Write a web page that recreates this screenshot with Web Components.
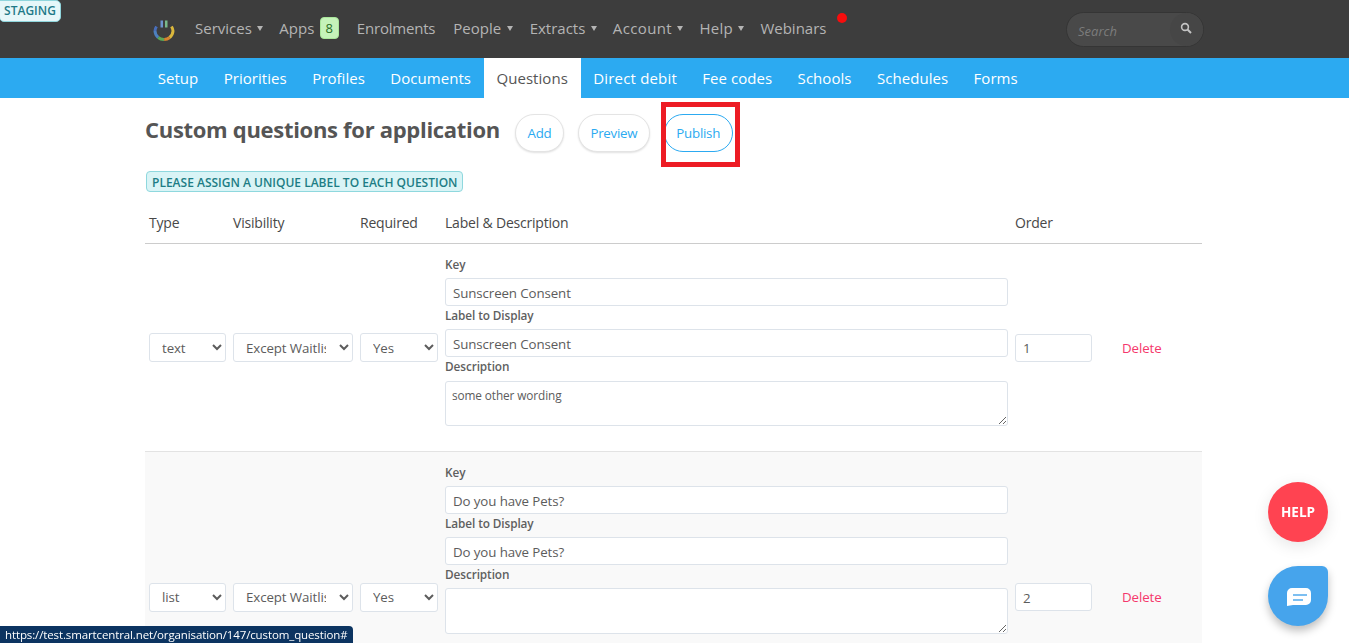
<!DOCTYPE html>
<html lang="en"><head><meta charset="utf-8"><title>Custom questions</title>
<style>
html,body{margin:0;padding:0;height:643px;overflow:hidden;background:#fff;font-family:"Open Sans","Noto Sans",sans-serif;color:#555}
</style></head><body>
<sc-staging>STAGING</sc-staging>
<sc-topbar>
  <sc-nav caret>Services</sc-nav>
  <sc-nav badge="8">Apps</sc-nav>
  <sc-nav style="letter-spacing:-.2px;margin-right:18px">Enrolments</sc-nav>
  <sc-nav caret style="margin-right:17px">People</sc-nav>
  <sc-nav caret>Extracts</sc-nav>
  <sc-nav caret style="letter-spacing:.35px">Account</sc-nav>
  <sc-nav caret style="letter-spacing:.25px">Help</sc-nav>
  <sc-nav dot>Webinars</sc-nav>
</sc-topbar>
<sc-subnav>
  <sc-tab>Setup</sc-tab><sc-tab>Priorities</sc-tab><sc-tab>Profiles</sc-tab><sc-tab>Documents</sc-tab><sc-tab active>Questions</sc-tab><sc-tab style="letter-spacing:.18px">Direct debit</sc-tab><sc-tab>Fee codes</sc-tab><sc-tab>Schools</sc-tab><sc-tab>Schedules</sc-tab><sc-tab>Forms</sc-tab>
</sc-subnav>
<sc-main>
  <sc-heading>
    <span slot="title">Custom questions for application</span>
    <sc-pill>Add</sc-pill><sc-pill>Preview</sc-pill><sc-pill active marked>Publish</sc-pill>
  </sc-heading>
  <sc-alert>Please assign a unique label to each question</sc-alert>
  <sc-table-head></sc-table-head>
  <sc-question type="text" order="1" key-text="Sunscreen Consent" desc="some other wording"></sc-question>
  <sc-question type="list" order="2" key-text="Do you have Pets?" desc="" alt></sc-question>
</sc-main>
<sc-help>HELP</sc-help>
<sc-chat></sc-chat>
<sc-status>https://test.smartcentral.net/organisation/147/custom_question#</sc-status>
<script>
function def(name, css, html, init){
  customElements.define(name, class extends HTMLElement{
    connectedCallback(){
      if(this.shadowRoot) return;
      const r=this.attachShadow({mode:'open'});
      r.innerHTML='<style>'+css+'</style>'+(typeof html==='function'?html(this):html);
      if(init) init(this,r);
    }
  });
}
const F='"Open Sans","Noto Sans",sans-serif';
def('sc-staging',`:host{position:absolute;left:-1px;top:0;box-sizing:border-box;width:62px;height:22px;background:#e6f7f9;border:1px solid #8fd5dc;border-radius:0 5px 5px 5px;color:#1f7a88;font:600 12px/20px ${F};text-align:center;z-index:3}`,'<slot></slot>');
def('sc-topbar',`:host{display:flex;align-items:center;height:58px;box-sizing:border-box;padding:0 145px 0 153px;background:#3d3d3d;position:relative}
 svg{flex:none;width:22px;height:24px;margin-right:20px;margin-top:-1px}
 .items{display:flex;align-items:center;flex:1;margin-top:-2px}
 .search{flex:none;box-sizing:border-box;width:138px;height:35px;margin-top:1px;border:1px solid #353535;border-radius:18px;background:#494949;display:flex;align-items:center;position:relative;padding:2px 0 0 11px;font:italic 13px ${F};color:#7c7c7c}
 .search i{position:absolute;right:0;top:0;width:33px;height:33px;border-radius:50%;background:#464646;display:flex;align-items:center;justify-content:center}
 .search svg{width:12px;height:12px;margin:-3px 0 0 -2px}`,
`<svg viewBox="0 0 22 24" aria-hidden="true">
 <g fill="none" stroke-width="3" opacity=".92">
 <path d="M3.5 9.500A9 9 0 0 0 2 14" stroke="#4a72c4"/>
 <path d="M2 14a9 9 0 0 0 3.200 6.500" stroke="#4f86c9"/>
 <path d="M5.200 20.500a9 9 0 0 0 6 2" stroke="#5fae5a"/>
 <path d="M11.200 22.500a9 9 0 0 0 5.500-2" stroke="#e58a2e"/>
 <path d="M16.700 20.500a9 9 0 0 0 3.300-6.500 9 9 0 0 0-1.500-4.500" stroke="#e8c23c"/></g>
 <rect x="7.500" y="3.500" width="2.500" height="7" fill="#6d93cf"/><rect x="12" y="3.500" width="2.500" height="7" fill="#79b98a"/></svg>
 <div class="items"><slot></slot></div>
 <div class="search">Search<i><svg viewBox="0 0 12 12" aria-hidden="true"><circle cx="5" cy="5" r="3.400" fill="none" stroke="#c4c4c4" stroke-width="1.600"/><path d="M7.500 7.500 11 11" stroke="#c4c4c4" stroke-width="2"/></svg></i></div>`);
def('sc-nav',`:host{display:flex;align-items:center;height:40px;margin-right:17px;color:#b4b4b4;font:15px/20px ${F};letter-spacing:0;position:relative;white-space:nowrap}
 :host([caret]){margin-right:16px}
 .c{width:0;height:0;border:3.600px solid transparent;border-top:5px solid #b4b4b4;border-bottom:0;margin-left:5.500px}
 .b{box-sizing:border-box;width:19px;height:22px;margin:0 1px 0 5.500px;border-radius:4px;background:#c5f3b9;border:1px solid #a9e69a;color:#2a6f25;font-size:13px;line-height:20px;text-align:center;letter-spacing:0}
 .d{position:absolute;left:77px;top:5px;width:10px;height:10px;border-radius:50%;background:#f70d0d}`,
 h=>`<slot></slot>${h.hasAttribute('caret')?'<span class="c"></span>':''}${h.hasAttribute('badge')?`<span class="b">${h.getAttribute('badge')}</span>`:''}${h.hasAttribute('dot')?'<span class="d"></span>':''}`);
def('sc-subnav',`:host{display:flex;height:40px;background:#2caaf1;padding-left:145px}`,'<slot></slot>');
def('sc-tab',`:host{display:block;padding:0 12.700px;font:15px/41px ${F};letter-spacing:.05px;color:#fff;white-space:nowrap}
 :host([active]){background:#fff;color:#555}`,'<slot></slot>');
def('sc-main',`:host{display:block;margin:0 147px 0 145px}`,'<slot></slot>');
def('sc-heading',`:host{display:flex;align-items:flex-start;height:38px;padding-top:16px;margin-bottom:19px}
 h1{margin:-1px 14px 0 0;font:700 22px/32px ${F};letter-spacing:-.3px;color:#555;white-space:nowrap;width:356px}`,
 '<h1><slot name="title"></slot></h1><slot></slot>');
def('sc-pill',`:host{display:block;box-sizing:border-box;height:38px;border-radius:19px;border:1px solid #e4e4e4;box-shadow:0 1px 2px rgba(0,0,0,.12);background:#fff;color:#2caaf1;font:13.300px/36px ${F};letter-spacing:-.25px;padding:0 11.500px;margin-right:14px;position:relative}
 :host([active]){border-color:#2caaf1;box-shadow:none}
 .mark{position:absolute;left:-4px;top:-13px;width:69px;height:55px;border:5px solid #ed1c24;pointer-events:none}`,
 h=>`<slot></slot>${h.hasAttribute('marked')?'<span class="mark"></span>':''}`);
def('sc-alert',`:host{display:block;box-sizing:border-box;width:317px;height:21px;margin-left:1px;background:#d9f4f6;border:1px solid #8fd8de;border-radius:4px;color:#1d7d85;font:600 12px/21px ${F};text-transform:uppercase;padding-left:5px;white-space:nowrap}`,'<slot></slot>');
const COLS='grid-template-columns:77px 120px 78px 563px 77px auto;column-gap:7px;padding-left:4px;';
def('sc-table-head',`:host{display:grid;${COLS}height:52px;box-sizing:border-box;padding-bottom:10px;align-items:end;border-bottom:1px solid #ccc;font:14px/20px ${F};color:#484848;letter-spacing:-.2px}`,
 '<span>Type</span><span>Visibility</span><span>Required</span><span>Label &amp; Description</span><span>Order</span><span></span>');
def('sc-question',`:host{display:grid;${COLS}align-items:center;box-sizing:border-box;height:208px;padding-top:11px;padding-bottom:11px;border-bottom:1px solid #e3e3e3}
 :host([alt]){background:#f9f9f9;height:290px;border-bottom:0}
 .f{align-self:start}
 select,input,textarea{box-sizing:border-box;width:100%;border:1px solid #dde3ea;border-radius:3px;background:#fff;color:#5c5c5c;font:13.300px ${F};margin:0;outline:0}
 select{height:29px;padding:0 10px 0 8px;letter-spacing:-.1px}
 input{height:28px;padding:1px 7px 0;letter-spacing:-.1px}
 textarea{display:block;height:45px;padding:5px 6px;font-size:11.800px;line-height:16px;resize:vertical;letter-spacing:-.1px}
 :host([alt]) textarea{height:46px}
 label{display:block;font:600 11.800px/15px ${F};color:#5f5f5f;height:23px;padding-top:2px;box-sizing:border-box;letter-spacing:-.1px}
 label.l3{height:24px}
 :host([alt]) label.l3{height:23px}
 a{color:#f5386c;font:13.300px ${F};margin-left:23px;letter-spacing:-.1px}`,
 h=>{const k=h.getAttribute('key-text');return `
 <select aria-label="Type"><option>${h.getAttribute('type')}</option></select>
 <select aria-label="Visibility"><option>Except Waitlist</option></select>
 <select aria-label="Required"><option>Yes</option></select>
 <div class="f"><label>Key</label><input value="${k}"><label>Label to Display</label><input value="${k}"><label class="l3">Description</label><textarea>${h.getAttribute('desc')}</textarea></div>
 <input value="${h.getAttribute('order')}">
 <a>Delete</a>`});
def('sc-help',`:host{position:fixed;left:1268px;top:482px;width:60px;height:60px;border-radius:50%;background:#ff4351;color:#fff;font:700 13.500px/60px ${F};text-align:center;box-shadow:0 4px 16px rgba(0,0,0,.1)}`,'<slot></slot>');
def('sc-chat',`:host{position:fixed;left:1268px;top:566px;width:60px;height:60px;border-radius:50% 6px 50% 50%;background:#46a4ec;box-shadow:0 5px 8px rgba(0,0,0,.25);display:flex;align-items:center;justify-content:center}
 svg{width:24px;height:18px;margin:2px 0 0 2px}`,'<svg viewBox="0 0 24 18" aria-hidden="true"><path d="M5 0h14a5 5 0 0 1 5 5v7a5 5 0 0 1-5 5H6l-6 1V5a5 5 0 0 1 5-5z" fill="#fff"/><rect x="6" y="6.300" width="14" height="1.400" fill="#46a4ec"/><rect x="6" y="11.300" width="10" height="1.400" fill="#46a4ec"/></svg>');
def('sc-status',`:host{position:fixed;left:0;top:626px;width:353px;height:17px;box-sizing:border-box;background:#0c3461;border-top-right-radius:4px;color:#fff;font:11.500px/18px ${F};padding-left:5px;white-space:nowrap;overflow:hidden;letter-spacing:-.12px}`,'<slot></slot>');
</script>
</body></html>
